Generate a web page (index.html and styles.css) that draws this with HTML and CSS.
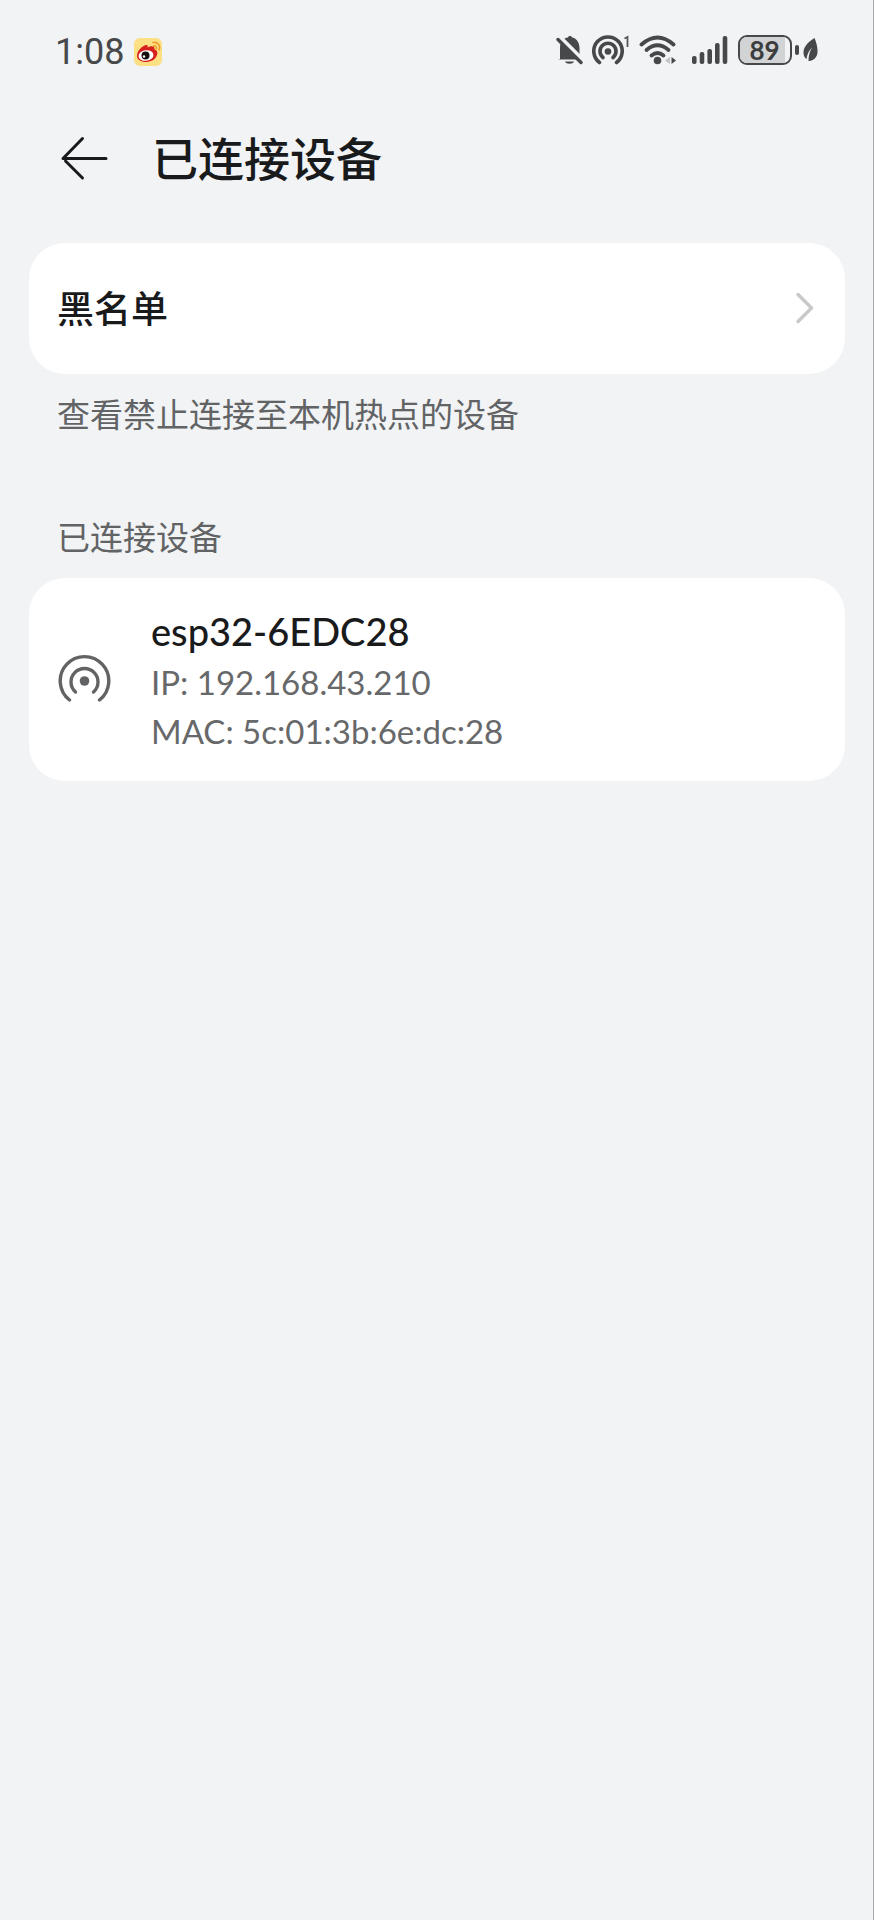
FILE: index.html
```html
<!DOCTYPE html>
<html lang="zh-CN">
<head>
<meta charset="utf-8">
<meta name="viewport" content="width=device-width, initial-scale=1">
<title>已连接设备</title>
<link rel="stylesheet" href="styles.css">
</head>
<body>
<div class="screen">
  <div class="status">
    <div class="status-left">
      <time class="clock">1:08</time>
      <svg class="app-icon" width="30" height="30" viewBox="0 0 30 30" aria-hidden="true">
        <rect x="1" y="1" width="28" height="28" rx="6" fill="#fddf84"/>
        <path d="M4 19C4 14 9 9 13 8C15 7.600 15 9 14.500 10.500C18 8.500 22 8.500 21.500 12.500C24 13.300 25 15 24 18C22.500 23 17 25 13 25C8 25 4 22.500 4 19Z" fill="#d6201f"/>
        <ellipse cx="13" cy="18.500" rx="7.500" ry="5.200" fill="#fff" transform="rotate(-8 13 18.500)"/>
        <circle cx="12.500" cy="18.500" r="4" fill="#17100f"/>
        <circle cx="11" cy="19.500" r="1.200" fill="#fff"/>
        <path d="M20 5.500C25 4.500 28 9 26 13M20.500 9C22.500 8.500 24 10 23.300 12" fill="none" stroke="#ee9a29" stroke-width="1.600" stroke-linecap="round"/>
      </svg>
    </div>
    <div class="status-right">
      <svg width="27" height="30" viewBox="0 0 27 30" aria-hidden="true">
        <path d="M4 24V13C4 6 8 3 12 2.500C12 .5 16 .5 16 2.500C20 3 23.500 7 23.500 13V20L26 24.500H2Z" fill="#47484a"/>
        <path d="M9 26.500H18C17 29.500 10 29.500 9 26.500Z" fill="#47484a"/>
        <path d="M3 1L28 26" stroke="#f1f3f5" stroke-width="4"/>
        <path d="M2 4.500L25 27.500" stroke="#47484a" stroke-width="3.400" stroke-linecap="round"/>
      </svg>
      <svg class="hotspot-status" width="40" height="30" viewBox="0 0 40 30" aria-hidden="true">
        <g fill="none" stroke="#47484a" stroke-width="3.600" stroke-linecap="round">
          <path d="M8.500 27.500A14.200 14.200 0 1 1 25.500 27.500"/>
          <path d="M12 22.500A8 8 0 1 1 22 22.500"/>
        </g>
        <circle cx="17" cy="16.500" r="3.300" fill="#47484a"/>
        <path d="M33.500 3.500L36.500 2V12" fill="none" stroke="#55565a" stroke-width="1.800"/>
      </svg>
      <svg class="wifi" width="38" height="30" viewBox="0 0 38 30" aria-hidden="true">
        <g fill="none" stroke="#47484a" stroke-width="3.800" stroke-linecap="round">
          <path d="M2.500 9.500Q18.500-4.500 34.500 9.500"/>
          <path d="M7.500 15Q18.500 5.500 29.500 15"/>
          <path d="M12.500 20.500Q18.500 15.500 24.500 20.500"/>
        </g>
        <circle cx="18.500" cy="25.500" r="3.800" fill="#47484a"/>
        <path d="M31 22V29L26 25.500Z" fill="#c2c3c5"/>
        <path d="M32.500 22V29L37 25.500Z" fill="#47484a"/>
      </svg>
      <svg class="signal" width="36" height="30" viewBox="0 0 36 30" aria-hidden="true">
        <g fill="#47484a">
          <rect x="0" y="21" width="4.600" height="8" rx="2"/>
          <rect x="7.700" y="17" width="4.600" height="12" rx="2"/>
          <rect x="15.400" y="14" width="4.600" height="15" rx="2"/>
          <rect x="23" y="8" width="4.600" height="21" rx="2"/>
          <rect x="30.700" y="1" width="4.600" height="28" rx="2"/>
        </g>
      </svg>
      <div class="battery"><span class="battery-level">89</span></div>
      <svg class="saver" width="24" height="30" viewBox="0 0 24 30" aria-hidden="true">
        <rect x="0" y="10" width="4" height="10" rx="2" fill="#47484a"/>
        <path d="M19.500 3C12 8 8.500 12 8.500 18C8.500 21 10 23 11.500 24C12 20 13.500 16 17 12.500C14.500 17 13.500 21 13.500 26C20 25.500 23 21 22.500 15C22.300 10.500 21 6.500 19.500 3Z" fill="#47484a"/>
      </svg>
    </div>
  </div>

  <header class="title-bar">
    <button class="back" type="button" aria-label="返回">
      <svg width="50" height="50" viewBox="0 0 50 50" aria-hidden="true">
        <path d="M47 25.500H4L23.500 5.500M6.500 28L23.500 45" fill="none" stroke="#191a1c" stroke-width="3" stroke-linecap="round" stroke-linejoin="round"/>
      </svg>
    </button>
    <h1 class="title">已连接设备</h1>
  </header>

  <main class="content">
    <a class="card link-card" href="#blacklist">
      <span class="link-label">黑名单</span>
      <svg width="20" height="34" viewBox="0 0 20 34" aria-hidden="true">
        <path d="M3 2.500L16.500 16L3 29.500" fill="none" stroke="#c8c8c9" stroke-width="3.400" stroke-linecap="round" stroke-linejoin="round"/>
      </svg>
    </a>
    <p class="note">查看禁止连接至本机热点的设备</p>
    <h2 class="section">已连接设备</h2>
    <section class="card device">
      <svg width="54" height="54" viewBox="0 0 54 54" aria-hidden="true">
        <g fill="none" stroke="#626365" stroke-width="3.400" stroke-linecap="round">
          <path d="M12.500 46A24.300 24.300 0 1 1 42.500 46"/>
          <path d="M18.500 38A13.500 13.500 0 1 1 36.500 38"/>
        </g>
        <circle cx="27.500" cy="27" r="4.800" fill="#626365"/>
      </svg>
      <div class="device-text">
        <h3 class="device-name">esp32-6EDC28</h3>
        <p class="device-line">IP: 192.168.43.210</p>
        <p class="device-line">MAC: 5c:01:3b:6e:dc:28</p>
      </div>
    </section>
  </main>
</div>
</body>
</html>
```
FILE: styles.css
```css
* {
  box-sizing: border-box;
}

body {
  margin: 0;
  background: #f1f3f5;
  color: #191a1c;
  font-family: Lato, "Noto Sans CJK SC", sans-serif;
}

h1, h2, h3, p {
  margin: 0;
}

svg {
  display: block;
  flex: none;
}

.screen {
  min-height: 100vh;
  border-right: 1px solid #aaabad;
}

.status {
  display: flex;
  align-items: center;
  justify-content: space-between;
  height: 100px;
  padding: 0 54px 0 55px;
}

.status-left,
.status-right {
  display: flex;
  align-items: center;
}

.status-left {
  gap: 9px;
  padding-top: 3px;
}

.clock {
  color: #47484a;
  font-family: Roboto, sans-serif;
  font-size: 36px;
  line-height: 40px;
}

.hotspot-status {
  margin-left: 8px;
}

.wifi {
  margin-left: 8px;
}

.signal {
  margin-left: 15px;
}

.battery {
  width: 54px;
  height: 30px;
  margin: 0 3px 0 10px;
  padding-right: 5px;
  border: 2px solid #47484a;
  border-radius: 9px;
}

.battery-level {
  display: block;
  height: 26px;
  padding-left: 4px;
  border-radius: 7px 0 0 7px;
  background: #d2d3d5;
  color: #3b3c3e;
  font-size: 26px;
  font-weight: 700;
  line-height: 26px;
  text-align: center;
}

.title-bar {
  display: flex;
  align-items: center;
  gap: 43px;
  height: 116px;
  padding-left: 59px;
}

.back {
  padding: 0;
  border: 0;
  background: none;
}

.title {
  padding-top: 2px;
  font-size: 46px;
  font-weight: 500;
  line-height: 64px;
}

.content {
  padding: 27px 28px 0 29px;
}

.card {
  display: flex;
  align-items: center;
  border-radius: 36px;
  background: #fff;
}

.link-card {
  justify-content: space-between;
  padding: 38px 30px 38px 28px;
  color: inherit;
  text-decoration: none;
}

.link-label {
  font-size: 37px;
  font-weight: 500;
  line-height: 55px;
}

.note,
.section {
  padding: 0 28px;
  color: #626365;
  font-size: 33px;
  font-weight: 400;
  line-height: 48px;
}

.note {
  margin-top: 16px;
}

.section {
  margin: 75px 0 17px;
}

.device {
  gap: 40px;
  padding: 28px 28px 25px;
}

.device-name {
  margin-bottom: 2px;
  font-size: 38px;
  font-weight: 500;
  line-height: 50px;
}

.device-line {
  color: #67686a;
  font-size: 33px;
  line-height: 49px;
}
```
